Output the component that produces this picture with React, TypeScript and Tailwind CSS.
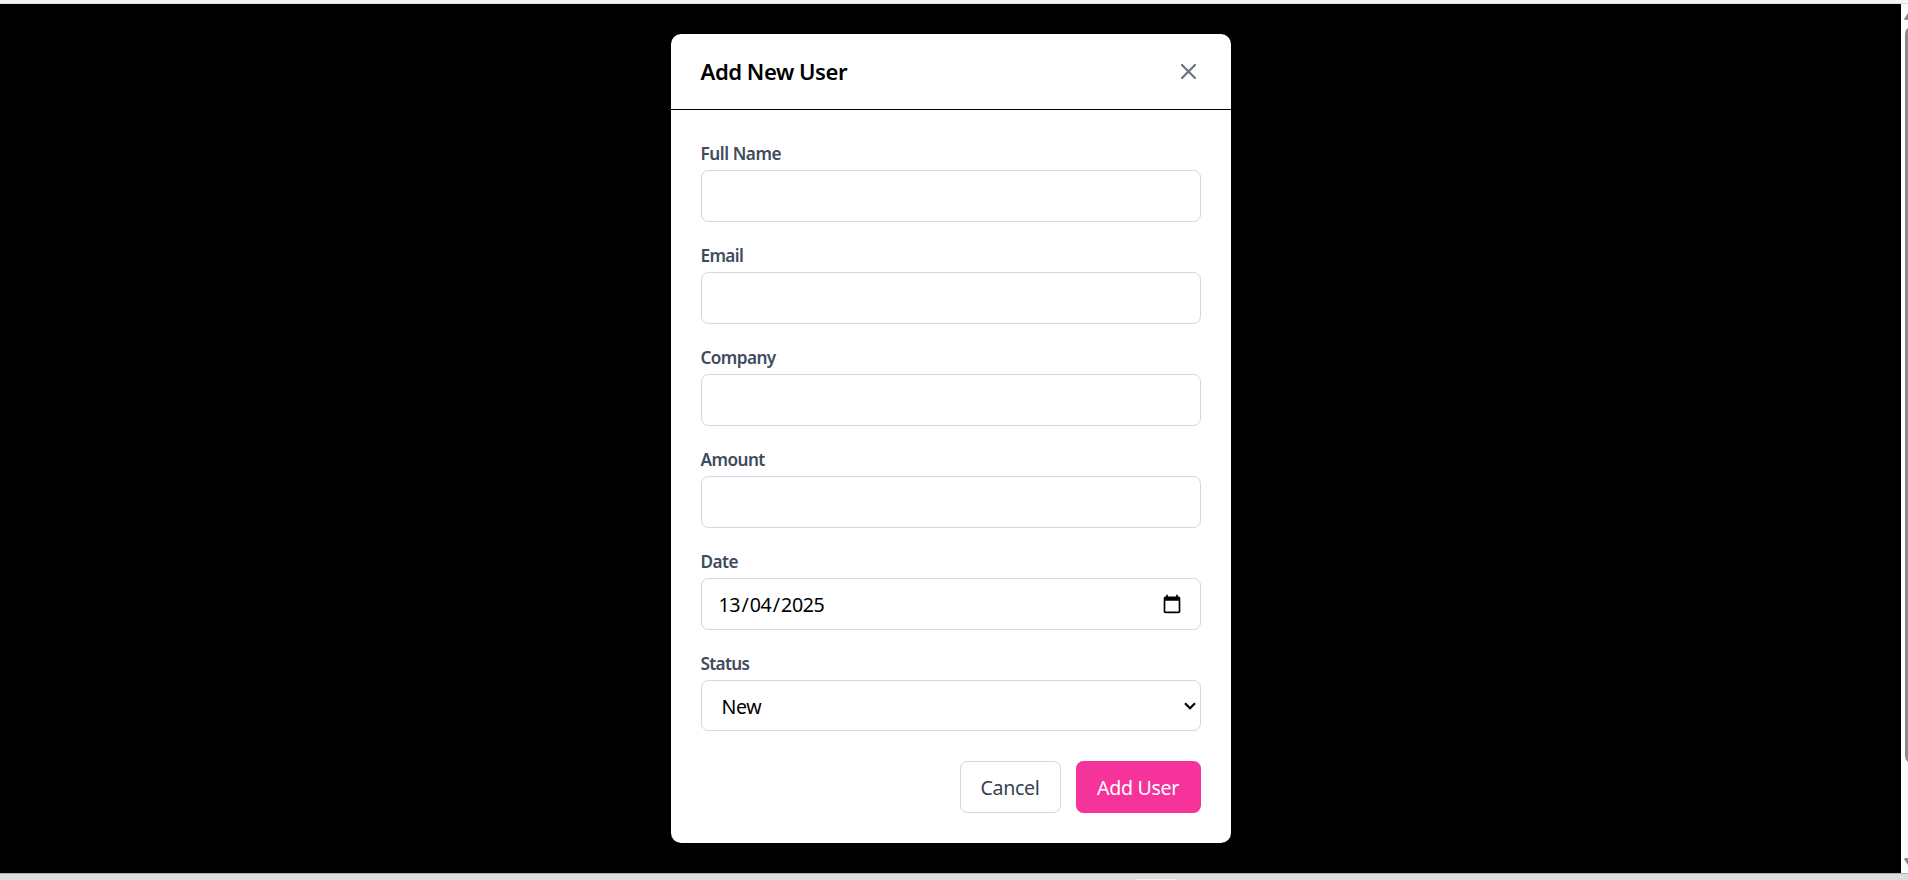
import { ReactNode } from 'react';

const box =
  'w-full rounded-[7.5px] border border-[#d1d5dc] bg-white text-[19.6px] text-black outline-none';

function Field({ label, tracking, children }: { label: string; tracking: string; children: ReactNode }) {
  return (
    <div className="flex flex-col gap-[5px]">
      <label className={`h-[25px] pt-px text-[17.2px] font-semibold leading-[25px] text-[#414b5c] ${tracking}`}>
        <span>{label}</span>
      </label>
      {children}
    </div>
  );
}

function CalendarIcon() {
  return (
    <svg width="20" height="20" viewBox="0 0 24 24" className="mr-px -mt-px" fill="#000">
      <path d="M20 3h-1V1h-2v2H7V1H5v2H4c-1.1 0-2 .9-2 2v16c0 1.1.9 2 2 2h16c1.1 0 2-.9 2-2V5c0-1.1-.9-2-2-2zm0 18H4V8h16v13z" />
    </svg>
  );
}

function Dialog() {
  return (
    <div className="flex h-[809px] w-[560px] flex-col rounded-[10px] bg-white">
      <header className="flex h-[76px] shrink-0 items-center justify-between border-b border-black px-[30px]">
        <h2 className="text-[22.1px] font-semibold leading-[35px] tracking-[-0.47px] text-black">Add New User</h2>
        <button className="-mt-px mr-[5px] text-[#6a7282]" aria-label="Close">
          <svg width="15" height="15" viewBox="0 0 15 15" fill="none" stroke="currentColor" strokeWidth="2.2" strokeLinecap="round">
            <path d="M1 1l13 13M14 1L1 14" />
          </svg>
        </button>
      </header>
      <form className="flex flex-col gap-5 px-[30px] pt-[30px]">
        <Field label="Full Name" tracking="tracking-[-0.45px]">
          <input className={`${box} h-[52px] px-4`} />
        </Field>
        <Field label="Email" tracking="tracking-[-0.65px]">
          <input className={`${box} h-[52px] px-4`} />
        </Field>
        <Field label="Company" tracking="tracking-[-0.6px]">
          <input className={`${box} h-[52px] px-4`} />
        </Field>
        <Field label="Amount" tracking="tracking-[-0.55px]">
          <input className={`${box} h-[52px] px-4`} />
        </Field>
        <Field label="Date" tracking="tracking-[-0.55px]">
          <div className={`${box} flex h-[52px] items-center justify-between px-[17px]`}>
            <span className="flex gap-[1.4px] pt-[2px] tracking-[-0.4px]">
              <span>13</span>
              <span>/</span>
              <span>04</span>
              <span>/</span>
              <span>2025</span>
            </span>
            <CalendarIcon />
          </div>
        </Field>
        <Field label="Status" tracking="tracking-[-0.7px]">
          <div className={`${box} flex h-[51px] items-center justify-between pl-5 pr-[4px]`}>
            <span className="pt-[2px] tracking-[-0.4px]">New</span>
            <svg width="12" height="8" viewBox="0 0 12 8" fill="none" stroke="#000" strokeWidth="2.2">
              <path d="M1 1.2l5 5 5-5" />
            </svg>
          </div>
        </Field>
        <div className="mt-[10px] flex justify-end gap-[15px] text-[19.6px]">
          <button type="button" className="h-[52px] w-[101px] rounded-[7.5px] border border-[#d1d5dc] pt-[2px] tracking-[-0.3px] text-[#364153]">
            <span>Cancel</span>
          </button>
          <button type="button" className="h-[52px] w-[125px] rounded-[7.5px] bg-[#f6339a] pt-[2px] tracking-[-0.3px] text-white">
            <span>Add User</span>
          </button>
        </div>
      </form>
    </div>
  );
}

export default function App() {
  return (
    <div className="flex h-[880px] w-[1908px] flex-col overflow-hidden bg-black font-['Noto_Sans','Open_Sans',sans-serif]">
      <div className="h-[4px] shrink-0 border-b border-[#dedcdd] bg-[#f8f4f5]" />
      <div className="flex h-[869px] shrink-0">
        <main className="flex w-[1901px] justify-center pt-[30px]">
          <Dialog />
        </main>
        <aside className="flex w-[7px] flex-col bg-[#fcfcfc]">
          <svg width="7" height="869" viewBox="0 0 7 869" fill="#8b8b8b">
            <path d="M7 9L3.3 14.5Q3 16 4.500 16H7z" />
            <path d="M7 24Q4 26 4 31V751Q4 756 7 758z" />
            <path d="M7 861L3.300 855.500Q3 854 4.500 854H7z" />
          </svg>
        </aside>
      </div>
      <footer className="flex h-[7px] shrink-0 border-t border-[#b0b0b0] bg-[#dcdddd] pl-[1135px] pt-[5px]">
        <div className="h-px w-[42px] bg-[#f2f2f2]" />
      </footer>
    </div>
  );
}
